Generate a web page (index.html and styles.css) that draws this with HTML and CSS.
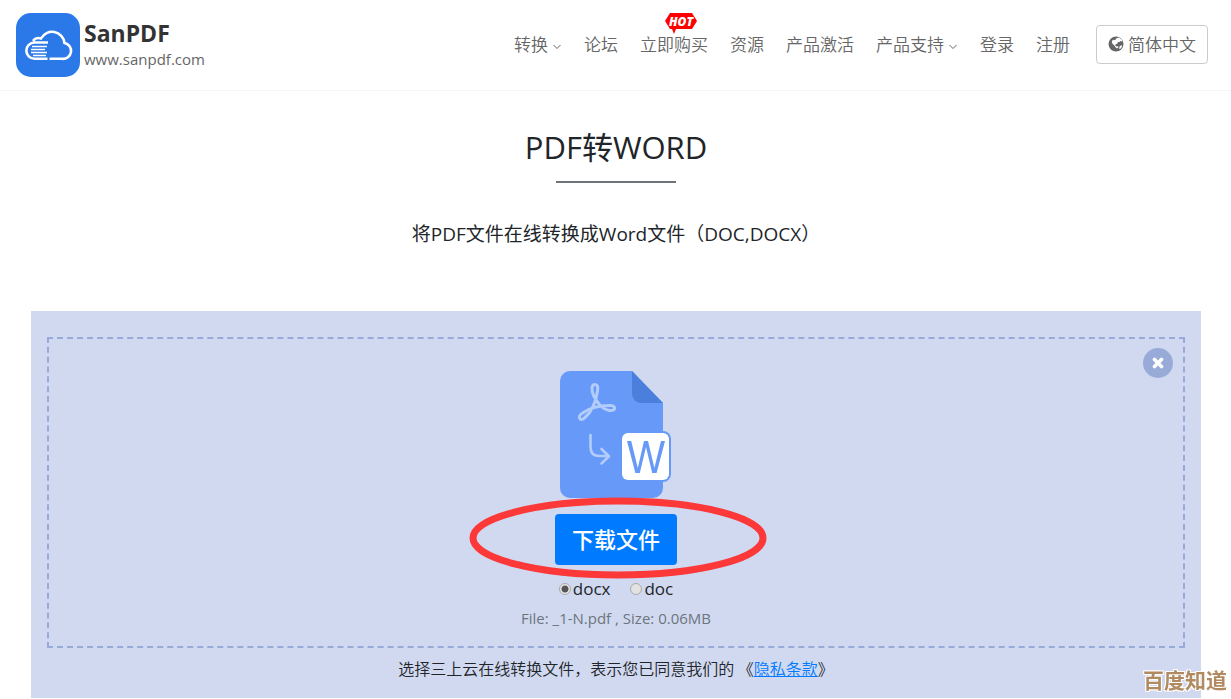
FILE: index.html
```html
<!DOCTYPE html>
<html lang="zh-CN">
<head>
<meta charset="utf-8">
<meta name="viewport" content="width=device-width, initial-scale=1">
<title>PDF转WORD - SanPDF</title>
<link rel="stylesheet" href="styles.css">
</head>
<body>
<header class="header">
  <a class="brand" href="#">
    <svg class="brand-logo" viewBox="0 0 64 64" aria-hidden="true">
      <rect width="64" height="64" rx="15" fill="#2b78e9"/>
      <g fill="none" stroke="#fff">
        <path stroke-width="2.600" d="M32 29.500H18.500a8 8 0 0 0 0 16.300H31.500M33.500 45.800H46A8 8 0 0 0 48.500 30 12.500 12.500 0 0 0 25 25.500a7 7 0 0 0-8 2.500"/>
        <path stroke-width="1.300" d="M16 33.500h15M15 36.500h14M15 39.500h16M17 42.500h13"/>
      </g>
    </svg>
    <span class="brand-text">
      <strong class="brand-name">SanPDF</strong>
      <span class="brand-url">www.sanpdf.com</span>
    </span>
  </a>
  <nav class="nav">
    <a class="nav-link" href="#">转换<svg class="chevron" viewBox="0 0 10 6" aria-hidden="true"><path d="M1.500 1 5 4.500 8.500 1"/></svg></a>
    <a class="nav-link" href="#">论坛</a>
    <a class="nav-link" href="#">立即购买
      <span class="hot"><svg class="hot-shape" viewBox="0 0 32 21" aria-hidden="true"><path fill="#f00" d="M5 0h22l5 8-5 8H11l-2 5-2-5H5L0 8z"/></svg><span class="hot-text">HOT</span></span>
    </a>
    <a class="nav-link" href="#">资源</a>
    <a class="nav-link" href="#">产品激活</a>
    <a class="nav-link" href="#">产品支持<svg class="chevron" viewBox="0 0 10 6" aria-hidden="true"><path d="M1.500 1 5 4.500 8.500 1"/></svg></a>
    <a class="nav-link" href="#">登录</a>
    <a class="nav-link" href="#">注册</a>
    <button class="language" type="button">
      <svg class="globe" viewBox="0 0 16 18" aria-hidden="true">
        <circle cx="8" cy="10" r="7.500" fill="#666"/>
        <path fill="#fff" transform="translate(0 2)" d="M8.500 2.200 11 1.400l2.600 2 .8 2-1.700-.4-1.200 1.100-1.600-.2-.4 1.600-1.800.8-.4 1.400 1.400.9 1.300-.4.5 1-1.300 1.200-1.500-1-1.300-2L5 8.200 3.800 6.500l.4-1.900 1.600-.9 1.200.5zM11.500 10.500l2-1.500.6 1.200-1.300 2.300-1.700.4z"/>
      </svg>简体中文
    </button>
  </nav>
</header>

<main class="page">
  <h1 class="title">PDF转WORD</h1>
  <p class="subtitle">将PDF文件在线转换成Word文件（DOC,DOCX）</p>

  <section class="panel">
    <div class="dropzone">
      <button class="close" type="button" aria-label="关闭">
        <svg viewBox="0 0 12 12" width="12" height="12" aria-hidden="true"><path d="M2.500 2.500l7 7M9.500 2.500l-7 7" stroke="#fff" stroke-width="3.600" stroke-linecap="round"/></svg>
      </button>
      <svg class="file-icon" viewBox="0 0 112 128" role="img" aria-label="PDF转WORD">
        <path fill="#6699f8" d="M10 0h62l31 32v85a10 10 0 0 1-10 10H10a10 10 0 0 1-10-10V10A10 10 0 0 1 10 0z"/>
        <path fill="#4a80dc" d="M72 0l31 32H81a9 9 0 0 1-9-9z"/>
        <g fill="none" stroke="#b2ccfb" stroke-linecap="round" stroke-linejoin="round">
          <path stroke-width="3" d="M35 13.500c-4 0-3.500 6-1.500 11 4 8 9.500 14 15.500 15 8 1 7-6 0-5-9 0-19 2.500-25.500 7-7 4-4 9.500 1 5.500 7-6 11.500-17 13-27 .8-4 0-6.500-2.500-6.500z"/>
          <path stroke-width="2.600" d="M30.500 64v12q0 9 9 9H48M41.500 78 49 85.300 41.500 92.500"/>
        </g>
        <rect x="59" y="60" width="52" height="51" rx="8" fill="#6699f8"/>
        <rect x="62" y="62" width="47" height="47" rx="6" fill="#fff"/>
        <path fill="#6699f8" d="M67 70h4.200l6.600 27L84 70h4l6.400 27L101 70h4l-8.400 32h-4.400L86 76l-6.200 26h-4.400z"/>
      </svg>
      <div class="download-row">
        <button class="download" type="button">下载文件</button>
        <svg class="highlight" viewBox="0 0 298 82" aria-hidden="true"><ellipse cx="149" cy="41" rx="145" ry="37"/></svg>
      </div>
      <div class="formats">
        <label class="format"><input class="radio" type="radio" name="format" checked>docx</label>
        <label class="format"><input class="radio" type="radio" name="format">doc</label>
      </div>
      <p class="file-info">File: _1-N.pdf , Size: 0.06MB</p>
    </div>
    <p class="terms">选择三上云在线转换文件，表示您已同意我们的 《<a class="terms-link" href="#">隐私条款</a>》</p>
  </section>
</main>
<div class="watermark">百度知道</div>
</body>
</html>
```
FILE: styles.css
```css
* {
  box-sizing: border-box;
}

body {
  margin: 0;
  background: #fff;
  color: #212529;
  font-family: "Open Sans", "Noto Sans CJK SC", sans-serif;
  font-size: 16px;
  line-height: 24px;
}

button {
  font-family: inherit;
  cursor: pointer;
}

.header {
  display: flex;
  align-items: center;
  justify-content: space-between;
  min-height: 91px;
  padding: 0 23px 0 16px;
  border-bottom: 1px solid #f5f5f5;
}

.brand {
  display: flex;
  align-items: center;
  gap: 4px;
  text-decoration: none;
}

.brand-logo {
  width: 64px;
  height: 64px;
}

.brand-text {
  display: flex;
  flex-direction: column;
}

.brand-name {
  color: #333;
  font-size: 23px;
  line-height: 28px;
}

.brand-url {
  color: #666;
  font-size: 15px;
}

.nav {
  display: flex;
  align-items: center;
  gap: 22px;
  padding-bottom: 2px;
  font-family: "Noto Sans CJK SC", sans-serif;
  font-weight: 350;
  font-size: 17px;
}

.nav-link {
  position: relative;
  color: #666;
  text-decoration: none;
  white-space: nowrap;
}

.chevron {
  width: 10px;
  height: 6px;
  margin-left: 4px;
  vertical-align: 1px;
  fill: none;
  stroke: #666;
}

.hot {
  position: absolute;
  top: -19px;
  left: 25px;
  width: 32px;
  height: 21px;
}

.hot-shape {
  display: block;
  width: 32px;
  height: 21px;
}

.hot-text {
  position: absolute;
  inset: 0;
  color: #fff;
  font: italic 800 12px/17px "Open Sans", sans-serif;
  text-align: center;
}

.language {
  display: flex;
  align-items: center;
  gap: 4px;
  height: 39px;
  margin-left: 4px;
  padding: 0 11px 2px;
  border: 1px solid #ccc;
  border-radius: 4px;
  background: #fff;
  color: #666;
  font-weight: 350;
  font-size: 17px;
}

.globe {
  width: 16px;
  height: 18px;
}

.page {
  padding: 32px 30px 0 31px;
}

.title {
  display: flex;
  flex-direction: column;
  align-items: center;
  gap: 10px;
  margin: 0;
  font-weight: 400;
  font-size: 31px;
  line-height: 48px;
}

.title::after {
  width: 120px;
  height: 2px;
  background: #6c757d;
  content: "";
}

.subtitle {
  margin: 36px 0 62px;
  font-size: 19px;
  line-height: 30px;
  text-align: center;
}

.panel {
  padding: 26px 16px 18px;
  background: #d1d9f0;
}

.dropzone {
  position: relative;
  display: flex;
  flex-direction: column;
  align-items: center;
  padding: 32px 16px 16px;
  border: 2px dashed #98abd8;
}

.close {
  position: absolute;
  top: 9px;
  right: 10px;
  display: flex;
  align-items: center;
  justify-content: center;
  width: 30px;
  height: 30px;
  padding: 0;
  border: 0;
  border-radius: 50%;
  background: #98abd8;
}

.file-icon {
  width: 112px;
  height: 128px;
}

.download-row {
  position: relative;
  margin-top: 15px;
}

.download {
  display: block;
  height: 51px;
  padding: 0 17px 4px;
  border: 0;
  border-radius: 4px;
  background: #007bff;
  color: #fff;
  font-weight: 500;
  font-size: 22px;
}

.highlight {
  position: absolute;
  top: -17px;
  left: -86px;
  width: 298px;
  height: 82px;
  fill: none;
  stroke: #fc3838;
  stroke-width: 7px;
  pointer-events: none;
}

.formats {
  display: flex;
  gap: 20px;
  margin-top: 12px;
  font-size: 17px;
}

.format {
  display: flex;
  align-items: center;
  gap: 2px;
}

.radio {
  width: 12px;
  height: 12px;
  margin: 0;
  border: 1px solid #aaa;
  border-radius: 50%;
  background: #e2e2e2;
  appearance: none;
}

.radio:checked {
  background: radial-gradient(circle, #555 0 3px, #e8e8e8 4px);
}

.file-info {
  margin: 5px 0 0;
  color: #6c757d;
  font-size: 15px;
}

.terms {
  margin: 8px 0 0;
  font-family: "Noto Sans CJK SC", sans-serif;
  font-weight: 350;
  text-align: center;
}

.terms-link {
  color: #007bff;
}

.watermark {
  position: fixed;
  right: 4px;
  bottom: 5px;
  color: #b18a61;
  font-weight: 700;
  font-size: 21px;
  line-height: 28px;
  text-shadow: 1px 1px #fff, -1px -1px #fff, 1px -1px #fff, -1px 1px #fff;
}
```
